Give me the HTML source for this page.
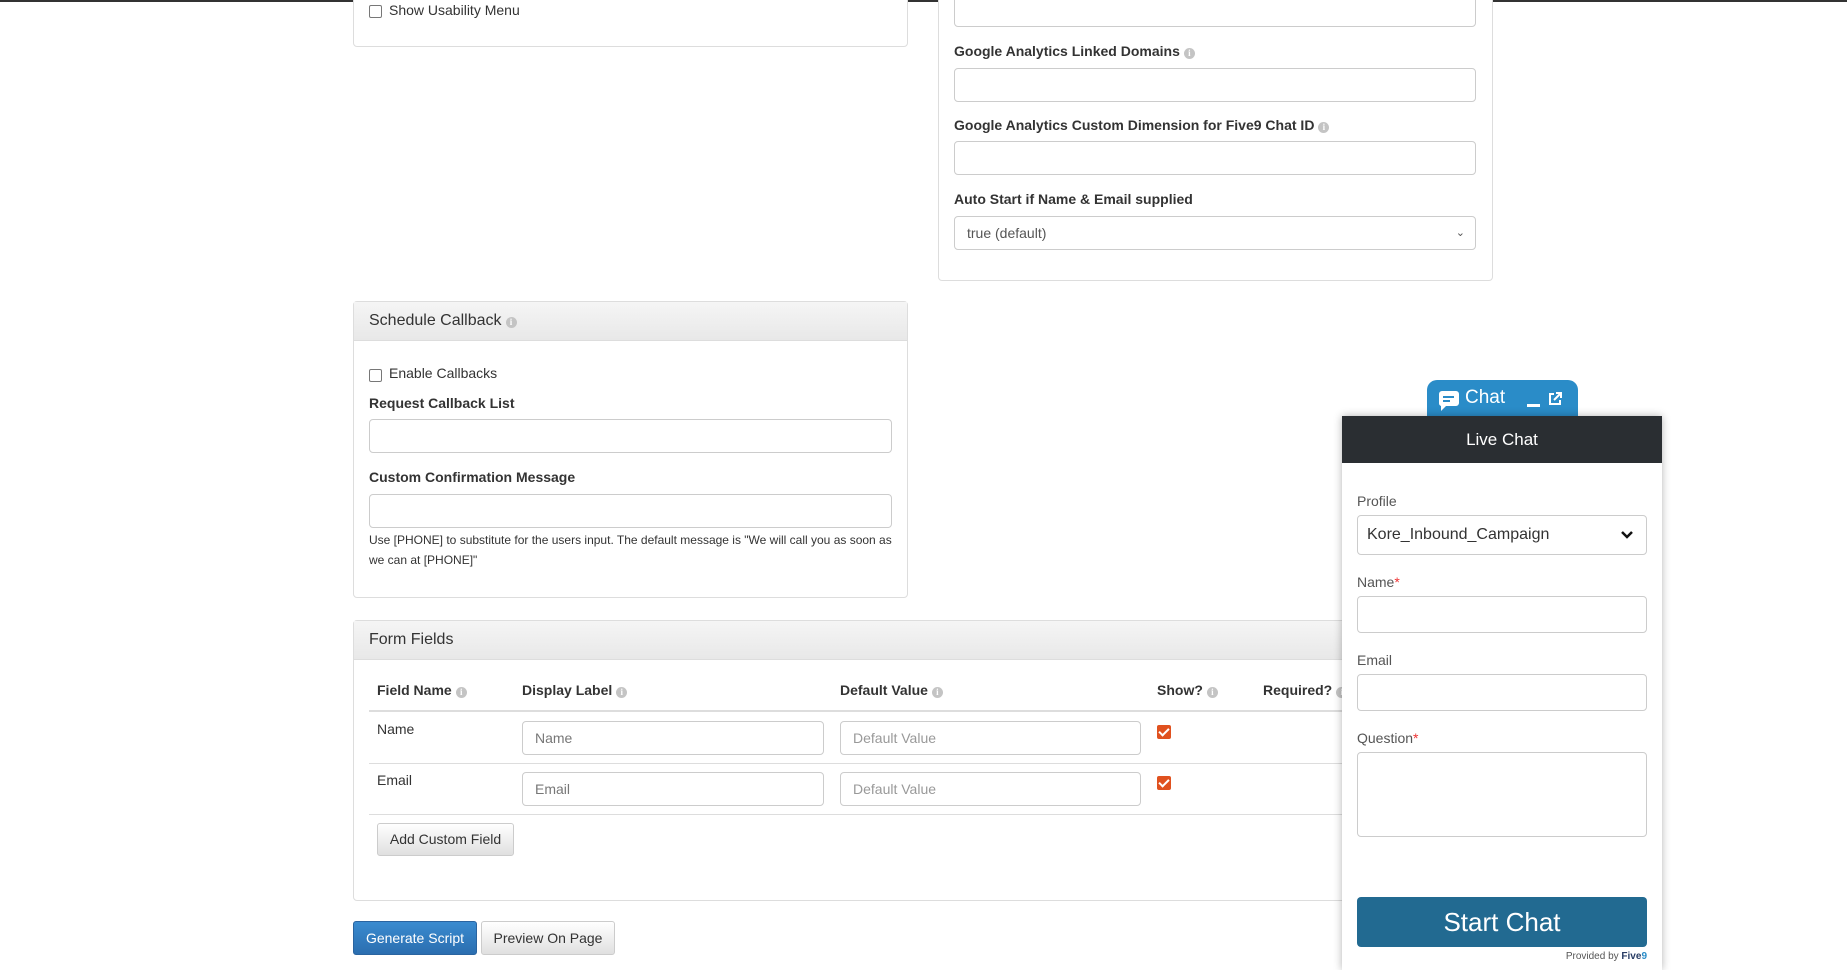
<!DOCTYPE html>
<html><head><meta charset="utf-8"><style>
*{box-sizing:border-box}
body{margin:0;width:1847px;height:970px;overflow:hidden;background:#fff;font-family:"Liberation Sans",Arial,sans-serif;color:#333;font-size:14px;position:relative}
.a{position:absolute}
.panel{position:absolute;border:1px solid #ddd;border-radius:4px;background:#fff}
.ph{position:absolute;left:0;right:0;top:0;background:linear-gradient(#f5f5f5,#e8e8e8);border-bottom:1px solid #ddd;font-size:16px;padding-left:15px;color:#333}
.inp{position:absolute;border:1px solid #ccc;border-radius:4px;background:#fff;font-size:14px;color:#777;padding-left:12px}
.lbl{position:absolute;font-weight:bold;font-size:14px;color:#333}
.i{display:inline-block;width:11px;height:11px;border-radius:50%;background:#c4c4c4;color:#fff;font-size:9px;line-height:11px;text-align:center;font-weight:bold;vertical-align:0;margin-left:4px;font-family:serif}
.cb{position:absolute;width:13px;height:13px;border:1px solid #777;border-radius:2px;background:#fff}
.ck{position:absolute;width:14px;height:14px;border-radius:2px;background:#e0511f}
.ck:after{content:"";position:absolute;left:4px;top:1px;width:4px;height:8px;border:solid #fff;border-width:0 2px 2px 0;transform:rotate(45deg)}
.hr{position:absolute;height:1px;background:#ddd}
.btn{position:absolute;border:1px solid #ccc;border-radius:3px;background:linear-gradient(#fff,#e0e0e0);font-size:14px;color:#333;text-align:center}
.cl{position:absolute;font-size:14px;color:#555}
.ci{position:absolute;border:1px solid #ccc;border-radius:4px;background:#fff}
</style></head><body>
<div class="a" style="left:0;top:0;width:1847px;height:2px;background:#333"></div>

<div class="panel" style="left:353px;top:-10px;width:555px;height:57px"></div>
<div class="cb" style="left:369px;top:5px"></div>
<div class="a" style="left:389px;top:2px;font-size:14px">Show Usability Menu</div>

<div class="panel" style="left:938px;top:-10px;width:555px;height:291px"></div>
<div class="inp" style="left:954px;top:-5px;width:522px;height:32px"></div>
<div class="lbl" style="left:954px;top:43px">Google Analytics Linked Domains<span class="i">i</span></div>
<div class="inp" style="left:954px;top:68px;width:522px;height:34px"></div>
<div class="lbl" style="left:954px;top:117px">Google Analytics Custom Dimension for Five9 Chat ID<span class="i">i</span></div>
<div class="inp" style="left:954px;top:141px;width:522px;height:34px"></div>
<div class="lbl" style="left:954px;top:191px">Auto Start if Name &amp; Email supplied</div>
<div class="inp" style="left:954px;top:216px;width:522px;height:34px;line-height:32px;color:#555">true (default)<span style="position:absolute;right:10px;top:0;font-size:11px">&#8964;</span></div>

<div class="panel" style="left:353px;top:301px;width:555px;height:297px">
<div class="ph" style="height:39px;line-height:37px">Schedule Callback<span class="i">i</span></div></div>
<div class="cb" style="left:369px;top:369px"></div>
<div class="a" style="left:389px;top:365px">Enable Callbacks</div>
<div class="lbl" style="left:369px;top:395px">Request Callback List</div>
<div class="inp" style="left:369px;top:419px;width:523px;height:34px"></div>
<div class="lbl" style="left:369px;top:469px">Custom Confirmation Message</div>
<div class="inp" style="left:369px;top:494px;width:523px;height:34px"></div>
<div class="a" style="left:369px;top:530px;font-size:12px;line-height:20px;width:525px">Use [PHONE] to substitute for the users input. The default message is "We will call you as soon as we can at [PHONE]"</div>

<div class="panel" style="left:353px;top:620px;width:1139px;height:281px">
<div class="ph" style="height:39px;line-height:37px">Form Fields</div></div>
<div class="lbl" style="left:377px;top:682px">Field Name<span class="i">i</span></div>
<div class="lbl" style="left:522px;top:682px">Display Label<span class="i">i</span></div>
<div class="lbl" style="left:840px;top:682px">Default Value<span class="i">i</span></div>
<div class="lbl" style="left:1157px;top:682px">Show?<span class="i">i</span></div>
<div class="lbl" style="left:1263px;top:682px">Required?<span class="i">i</span></div>
<div class="a" style="left:369px;top:710px;width:1120px;height:2px;background:#ddd"></div>
<div class="a" style="left:377px;top:721px">Name</div>
<div class="inp" style="left:522px;top:721px;width:302px;height:34px;line-height:32px">Name</div>
<div class="inp" style="left:840px;top:721px;width:301px;height:34px;line-height:32px;color:#999">Default Value</div>
<div class="ck" style="left:1157px;top:725px"></div>
<div class="hr" style="left:369px;top:763px;width:1120px"></div>
<div class="a" style="left:377px;top:772px">Email</div>
<div class="inp" style="left:522px;top:772px;width:302px;height:34px;line-height:32px">Email</div>
<div class="inp" style="left:840px;top:772px;width:301px;height:34px;line-height:32px;color:#999">Default Value</div>
<div class="ck" style="left:1157px;top:776px"></div>
<div class="hr" style="left:369px;top:814px;width:1120px"></div>
<div class="btn" style="left:377px;top:823px;width:137px;height:33px;line-height:31px">Add Custom Field</div>

<div class="btn" style="left:353px;top:921px;width:124px;height:34px;line-height:32px;background:linear-gradient(#3a8bd0,#2b6eb0);border-color:#2a64a0;color:#fff">Generate Script</div>
<div class="btn" style="left:481px;top:921px;width:134px;height:34px;line-height:32px">Preview On Page</div>

<!-- chat -->
<div class="a" style="left:1427px;top:380px;width:151px;height:40px;background:#2a8cc8;border-radius:10px 10px 0 0;color:#fff">
<svg class="a" style="left:11px;top:10px" width="22" height="22" viewBox="0 0 22 22"><path d="M4 1h14a3 3 0 0 1 3 3v9a3 3 0 0 1-3 3H8l-5 5v-5a3 3 0 0 1-2-3V4a3 3 0 0 1 3-3z" fill="#fff"/><path d="M5 7h11M5 11h7" stroke="#2a8cc8" stroke-width="2"/></svg>
<div class="a" style="left:38px;top:7px;font-size:19px">Chat</div>
<div class="a" style="left:100px;top:24px;width:13px;height:3px;background:#fff"></div>
<svg class="a" style="left:120px;top:11px" width="16" height="16" viewBox="0 0 16 16" fill="none" stroke="#fff" stroke-width="2"><path d="M7 3H3v10h10V9M9 2h5v5M14 2L7 9"/></svg>
</div>
<div class="a" style="left:1342px;top:416px;width:320px;height:554px;background:#fff;box-shadow:0 0 8px rgba(0,0,0,.3)"></div>
<div class="a" style="left:1342px;top:416px;width:320px;height:47px;background:#2a2e32;color:#fff;font-size:17px;text-align:center;line-height:47px">Live Chat</div>
<div class="cl" style="left:1357px;top:493px">Profile</div>
<div class="ci" style="left:1357px;top:515px;width:290px;height:40px;font-size:16px;color:#333;padding-left:9px;line-height:38px">Kore_Inbound_Campaign
<svg class="a" style="left:262px;top:14px" width="14" height="10" viewBox="0 0 14 10"><path d="M2 2l5 5 5-5" stroke="#111" stroke-width="2.5" fill="none"/></svg></div>
<div class="cl" style="left:1357px;top:574px">Name<span style="color:#e33">*</span></div>
<div class="ci" style="left:1357px;top:596px;width:290px;height:37px"></div>
<div class="cl" style="left:1357px;top:652px">Email</div>
<div class="ci" style="left:1357px;top:674px;width:290px;height:37px"></div>
<div class="cl" style="left:1357px;top:730px">Question<span style="color:#e33">*</span></div>
<div class="ci" style="left:1357px;top:752px;width:290px;height:85px"></div>
<div class="a" style="left:1357px;top:897px;width:290px;height:50px;background:#226a91;border-radius:4px;color:#fff;font-size:26px;text-align:center;line-height:50px">Start Chat</div>
<div class="a" style="left:1500px;top:951px;width:147px;text-align:right;font-size:10px;color:#555">Provided by <b style="color:#2a3e66">Five<span style="color:#2a8cc8">9</span></b></div>
</body></html>
